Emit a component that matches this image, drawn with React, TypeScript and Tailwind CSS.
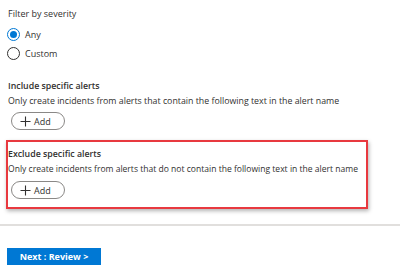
import React from "react";

function AddButton() {
  return (
    <button className="flex h-[18px] w-[54px] items-center gap-[3px] rounded-full border border-[#8a8886] bg-white pl-[8px] text-[9px] leading-none text-[#323130]">
      <svg width="11" height="11" viewBox="0 0 11 11" className="shrink-0">
        <path d="M5.5 0.5V10.5M0.5 5.5H10.5" stroke="#323130" strokeWidth="1.1" fill="none" />
      </svg>
      <span>Add</span>
    </button>
  );
}

function Radio({ checked, label }: { checked: boolean; label: string }) {
  return (
    <div className="flex h-[19px] items-center gap-[5px]">
      <div
        className={
          checked
            ? "flex h-[13px] w-[13px] items-center justify-center rounded-full border border-[#0078d4]"
            : "flex h-[13px] w-[13px] items-center justify-center rounded-full border border-[#323130]"
        }
      >
        {checked && <div className="h-[7px] w-[7px] rounded-full bg-[#0078d4]" />}
      </div>
      <span className="text-[9px] text-[#323130]">{label}</span>
    </div>
  );
}

export default function App() {
  return (
    <div
      className="h-[270px] w-[400px] overflow-hidden bg-white text-[#323130]"
      style={{ fontFamily: '"Open Sans", "Noto Sans", sans-serif' }}
    >
      <div className="px-[8px] pt-[6px]">
        <div className="text-[9px] leading-[16px]">Filter by severity</div>
        <div className="mt-[3px] -ml-[1px] flex flex-col gap-[0px]">
          <Radio checked label="Any" />
          <Radio checked={false} label="Custom" />
        </div>

        <div className="mt-[16px] text-[8.8px] font-semibold leading-[15px]">Include specific alerts</div>
        <div className="whitespace-nowrap text-[8.8px] leading-[15px]">
          Only create incidents from alerts that contain the following text in the alert name
        </div>
        <div className="ml-[3px] mt-[3px]">
          <AddButton />
        </div>
      </div>

      <div className="ml-[6px] mt-[10px] w-[362px] border-2 border-[#e8393f] pb-[8px] pl-[0px] pt-[5px] shadow-[1px_2px_4px_rgba(0,0,0,0.3)]">
        <div className="text-[8.8px] font-semibold leading-[15px]">Exclude specific alerts</div>
        <div className="whitespace-nowrap text-[8.55px] leading-[15px]">
          Only create incidents from alerts that do not contain the following text in the alert name
        </div>
        <div className="ml-[3px] mt-[4px]">
          <AddButton />
        </div>
      </div>

      <div className="mt-[15px] h-[2px] w-full bg-[#e1dfdd]" />

      <div className="px-[7px] pt-[16px]">
        <button className="h-[17px] w-[94px] bg-[#0078d4] text-[9px] font-bold leading-none text-white">
          Next : Review &gt;
        </button>
      </div>
    </div>
  );
}
